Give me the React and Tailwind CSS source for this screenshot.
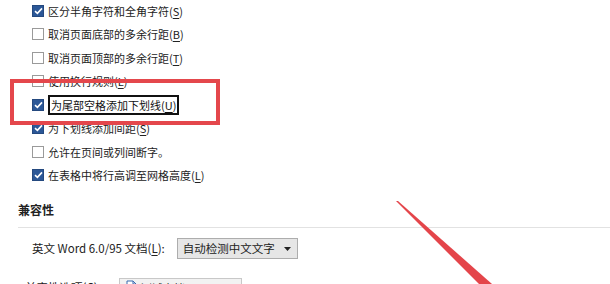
import React from "react";

const rows = [
  { label: "区分半角字符和全角字符", key: "S", checked: true },
  { label: "取消页面底部的多余行距", key: "B", checked: false },
  { label: "取消页面顶部的多余行距", key: "T", checked: false },
  { label: "使用换行规则", key: "L", checked: false },
  { label: "为尾部空格添加下划线", key: "U", checked: true, boxed: true },
  { label: "为下划线添加间距", key: "S", checked: true },
  { label: "允许在页间或列间断字。", key: null, checked: false },
  { label: "在表格中将行高调至网格高度", key: "L", checked: true },
];

const Checkbox = ({ checked }) =>
  checked ? (
    <span className="w-[12px] h-[12px] bg-[#2b5797] border border-[#24497f] flex items-center justify-center shrink-0">
      <svg width="9" height="8" viewBox="0 0 9 8">
        <path d="M1 4.2 L3.4 6.4 L8 1.4" fill="none" stroke="#fff" strokeWidth="1.6" />
      </svg>
    </span>
  ) : (
    <span className="w-[12px] h-[12px] bg-white border border-[#9a9a9a] shrink-0" />
  );

const Label = ({ text, k }) => (
  <span>
    {text}
    {k && (
      <>
        (<span className="underline underline-offset-2">{k}</span>)
      </>
    )}
  </span>
);

export default function App() {
  return (
    <div
      className="relative w-[610px] h-[284px] overflow-hidden bg-white text-[#222] text-[11px]"
      style={{ fontFamily: '"Noto Sans CJK SC", "Noto Sans", sans-serif' }}
    >
      {/* Option list */}
      <div className="flex flex-col pl-[32px] mt-[-1px]">
        {rows.map((r, i) => (
          <div key={i} className="h-[23.5px] flex items-center gap-[4px]">
            <Checkbox checked={r.checked} />
            <span
              className={
                r.boxed
                  ? "border-2 border-[#111] px-[1px] h-[20px] flex items-center bg-white text-[#111]"
                  : ""
              }
            >
              <Label text={r.label} k={r.key} />
            </span>
          </div>
        ))}
      </div>

      {/* Compatibility */}
      <div className="pl-[18px] mt-[15px]">
        <div className="text-[12px] font-bold text-[#222] leading-[16px]">兼容性</div>
        <div className="h-px bg-[#e2e2e2] mt-[9px]" />
        <div className="flex items-center pl-[14px] mt-[10px] gap-[12px]">
          <span className="text-[11.5px]">
            英文 Word 6.0/95 文档(<span className="underline underline-offset-2">L</span>):
          </span>
          <div className="w-[121px] h-[21px] bg-[#e6e6e6] border border-[#adadad] flex items-center justify-between pl-[5px] pr-[6px] text-[11.5px]">
            <span>自动检测中文文字</span>
            <svg width="7" height="4" viewBox="0 0 7 4">
              <path d="M0 0 H7 L3.5 4 Z" fill="#222" />
            </svg>
          </div>
        </div>
        <div className="flex items-start pl-[7px] mt-[19px] gap-[18px]">
          <span className="text-[11.5px] mt-[1px]">兼容性选项(C):</span>
          <div className="w-[123px] h-[20px] bg-[#f2f2f2] border border-[#c8c8c8] flex items-start gap-[4px] pl-[6px] pt-[1px]">
            <svg width="11" height="13" viewBox="0 0 11 13">
              <path d="M1 1 H7 L10 4 V12 H1 Z" fill="#fff" stroke="#3b6bb0" />
              <path d="M7 1 V4 H10" fill="none" stroke="#3b6bb0" />
            </svg>
            <span className="text-[11px]">测试文档1.docx</span>
          </div>
        </div>
      </div>

      {/* Red highlight box */}
      <div className="absolute left-[10px] top-[79px] w-[210px] h-[46px] border-[4px] border-[#e4474c] pointer-events-none" />

      {/* Red arrow */}
      <svg className="absolute left-0 top-0 pointer-events-none" width="610" height="284">
        <polygon points="396,201 398,201 492,284 479,284" fill="#e4454a" />
      </svg>
    </div>
  );
}
